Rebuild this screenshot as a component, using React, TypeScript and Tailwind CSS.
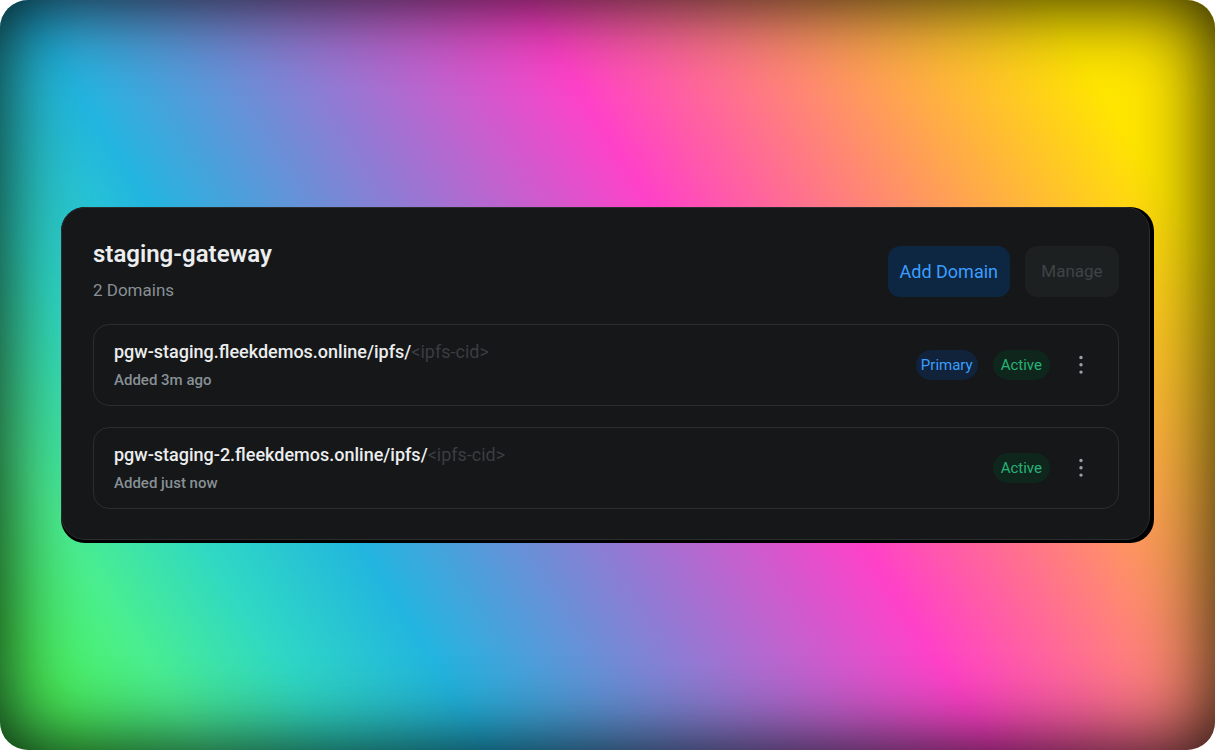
const domains = [
  { host: "pgw-staging.fleekdemos.online/ipfs/", added: "Added 3m ago", primary: true },
  { host: "pgw-staging-2.fleekdemos.online/ipfs/", added: "Added just now", primary: false },
];

function Badge({ tone, children }: { tone: "blue" | "green"; children: string }) {
  const colors = tone === "blue" ? "bg-[#10233b] px-[5px] text-[#3b9eff]" : "bg-[#0f261d] px-2 text-[#27b376]";
  return <span className={`rounded-full text-[15px] leading-[30px] ${colors}`}>{children}</span>;
}

function DomainRow({ host, added, primary }: { host: string; added: string; primary: boolean }) {
  return (
    <li className="flex items-center justify-between rounded-2xl border border-[#2b2d2f] pr-[25px] pl-5">
      <div className="pt-[11px] pb-[13px]">
        <p className="text-lg leading-8 font-medium text-[#ecedee]">
          {host}
          <span className="font-normal text-[#3a3d41]">&lt;ipfs-cid&gt;</span>
        </p>
        <p className="text-[15px] leading-6 font-medium text-[#889096]">{added}</p>
      </div>
      <div className="flex items-center gap-[15px]">
        {primary && <Badge tone="blue">Primary</Badge>}
        <Badge tone="green">Active</Badge>
        <button type="button" aria-label={`Options for ${host}`} className="ml-1 flex size-6 items-center justify-center text-[#9ba1a6]">
          <svg viewBox="0 0 24 24" className="size-6" fill="currentColor" aria-hidden="true">
            <circle cx="12" cy="4.5" r="1.7" />
            <circle cx="12" cy="11.8" r="1.7" />
            <circle cx="12" cy="19.1" r="1.7" />
          </svg>
        </button>
      </div>
    </li>
  );
}

export default function App() {
  return (
    <main className="flex min-h-screen items-center rounded-[28px] bg-[linear-gradient(58deg,#4bf05a_5%,#4aee90_12%,#2fd8c4_20%,#22b5df_29%,#ff41c8_59%,#ffe600_90%)] px-[61px] font-['Roboto',sans-serif] shadow-[inset_0_0_80px_rgba(0,0,0,0.95)]">
      <div className="w-full overflow-hidden rounded-3xl bg-black pr-1 pb-[3px]">
        <section className="rounded-3xl border border-[#2b2d2f] bg-[#151718] pt-[31px] pr-[30px] pb-[30px] pl-[31px]">
          <header className="flex items-center justify-between">
            <div>
              <h1 className="text-2xl leading-[30px] font-semibold text-[#ecedee]">staging-gateway</h1>
              <p className="mt-2 text-[17px] leading-[27px] text-[#889096]">2 Domains</p>
            </div>
            <div className="flex gap-[15px]">
              <button type="button" className="h-[51px] rounded-xl bg-[#0d2642] px-3 text-lg text-[#3b9eff]">Add Domain</button>
              <button type="button" disabled className="h-[51px] min-w-[94px] rounded-xl bg-[#1c2021] px-4 text-[17px] text-[#3f4346]">Manage</button>
            </div>
          </header>
          <ul className="mt-5 flex flex-col gap-[21px]">
            {domains.map((domain) => (
              <DomainRow key={domain.host} {...domain} />
            ))}
          </ul>
        </section>
      </div>
    </main>
  );
}
